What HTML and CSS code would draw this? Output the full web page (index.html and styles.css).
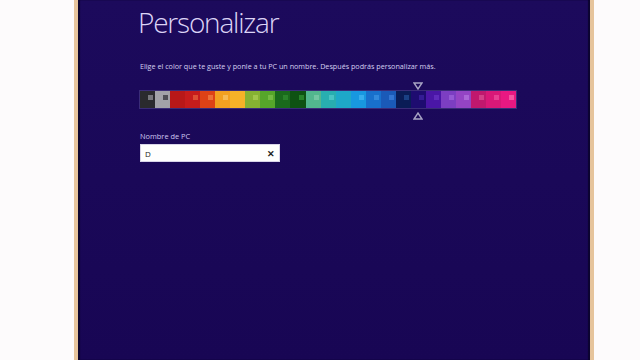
FILE: index.html
```html
<!DOCTYPE html>
<html lang="es">

<head>
    <meta charset="UTF-8">
    <meta name="viewport" content="width=device-width, initial-scale=1.0">
    <title>Personalizar</title>
    <link rel="stylesheet" href="styles.css">
</head>

<body>
    <div class="frame">
        <div class="screen">
            <h1>Personalizar</h1>
            <p class="intro">Elige el color que te guste y ponle a tu PC un nombre. Después podrás personalizar más.</p>

            <div class="picker">
                <div class="strip">
                    <span class="cell" style="background:#2a2a2e"><i style="background:#8a8a90"></i></span>
                    <span class="cell" style="background:#a2a2a8"><i style="background:#3a3a40"></i></span>
                    <span class="cell" style="background:#b81818"></span>
                    <span class="cell" style="background:#c61c1c"><i style="background:#e45a3a"></i></span>
                    <span class="cell" style="background:#de4216"><i style="background:#f07a40"></i></span>
                    <span class="cell" style="background:#f2a020"><i style="background:#f8c060"></i></span>
                    <span class="cell" style="background:#f6b228"></span>
                    <span class="cell" style="background:#86b232"><i style="background:#a8cc50"></i></span>
                    <span class="cell" style="background:#56a62a"><i style="background:#7cc048"></i></span>
                    <span class="cell" style="background:#1a6a1c"><i style="background:#2e8a2e"></i></span>
                    <span class="cell" style="background:#0e5212"><i style="background:#2e8e30"></i></span>
                    <span class="cell" style="background:#52b68e"><i style="background:#7ccaa8"></i></span>
                    <span class="cell" style="background:#28aeb0"><i style="background:#50c8c8"></i></span>
                    <span class="cell" style="background:#1ea8c8"></span>
                    <span class="cell" style="background:#1898e0"><i style="background:#40b4f0"></i></span>
                    <span class="cell" style="background:#1870cc"><i style="background:#3a90e0"></i></span>
                    <span class="cell" style="background:#1a5ab8"><i style="background:#3a7cd8"></i></span>
                    <span class="cell" style="background:#0a1c56"><i style="background:#1e4a90"></i></span>
                    <span class="cell" style="background:#1e0c70"><i style="background:#3a20a0"></i></span>
                    <span class="cell" style="background:#4a16a6"><i style="background:#6430c0"></i></span>
                    <span class="cell" style="background:#7c3ec2"><i style="background:#9a60d8"></i></span>
                    <span class="cell" style="background:#9444c4"><i style="background:#b070dc"></i></span>
                    <span class="cell" style="background:#c0186e"><i style="background:#d84a90"></i></span>
                    <span class="cell" style="background:#d81878"><i style="background:#ec4a9a"></i></span>
                    <span class="cell" style="background:#e81882"><i style="background:#f864aa"></i></span>
                </div>
                <svg class="marker marker-top" width="10" height="8" viewBox="0 0 10 8">
                    <path d="M1 1 H9 L5 7 Z" fill="none" stroke="#a8a4c4" stroke-width="1.4" />
                </svg>
                <svg class="marker marker-bottom" width="10" height="8" viewBox="0 0 10 8">
                    <path d="M1 7 H9 L5 1 Z" fill="none" stroke="#a8a4c4" stroke-width="1.4" />
                </svg>
            </div>

            <label class="field-label" for="pcname">Nombre de PC</label>
            <div class="field">
                <input type="text" id="pcname" value="D">
                <span class="clear">✕</span>
            </div>
        </div>
    </div>
</body>

</html>
```

FILE: styles.css
```css
body {
    margin: 0;
    background-color: #fdfbfc;
    font-family: "Open Sans", "Noto Sans", sans-serif;
}

.frame {
    width: 512px;
    height: 360px;
    margin-left: 74px;
    border-left: 4px solid #e6c49c;
    border-right: 4px solid #e6c49c;
}

.screen {
    height: 100%;
    box-sizing: border-box;
    padding: 4px 0 0 60px;
    background: linear-gradient(#1c0a5c, #180654);
    box-shadow: inset 2px 0 1px #0c0430, inset -2px 0 1px #0c0430;
    color: #dcd4f6;
}

h1 {
    margin: 0;
    font-size: 28px;
    font-weight: 300;
    letter-spacing: -1.2px;
    line-height: 36px;
}

.intro {
    margin: 21px 0 0 2px;
    font-size: 7.2px;
    line-height: 10px;
    color: #d6d0f0;
}

.picker {
    position: relative;
    margin: 20px 0 0 2px;
    width: 376px;
}

.strip {
    display: flex;
    height: 17px;
    box-shadow: 0 0 0 1px #3a2c78;
}

.cell {
    position: relative;
    flex: 1;
}

.cell i {
    position: absolute;
    top: 4px;
    right: 2px;
    width: 5px;
    height: 5px;
    opacity: 0.8;
}

.marker {
    position: absolute;
    left: 273px;
}

.marker-top {
    top: -9px;
}

.marker-bottom {
    top: 21px;
}

.field-label {
    display: block;
    margin: 23px 0 0 2px;
    font-size: 7.4px;
    line-height: 10px;
    color: #cfc6f0;
}

.field {
    display: flex;
    align-items: center;
    width: 140px;
    height: 18px;
    margin: 3px 0 0 2px;
    box-sizing: border-box;
    background-color: #fefefe;
    border: 1px solid #d8d4e8;
}

.field input {
    flex: 1;
    min-width: 0;
    border: none;
    outline: none;
    padding: 0 0 0 4px;
    font-family: "Open Sans", sans-serif;
    font-size: 8px;
    color: #222;
    background: transparent;
}

.clear {
    width: 16px;
    font-size: 9px;
    font-weight: bold;
    color: #222;
    text-align: center;
}
```
